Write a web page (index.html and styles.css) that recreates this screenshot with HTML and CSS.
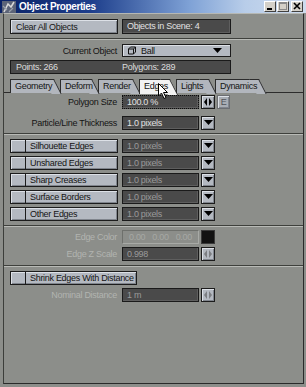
FILE: index.html
```html
<!DOCTYPE html>
<html lang="en">
<head>
    <meta charset="UTF-8">
    <title>Object Properties</title>
    <link rel="stylesheet" href="styles.css">
</head>
<body>
    <div class="window">
        <div class="titlebar">
            <svg class="app-icon" width="14" height="12" viewBox="0 0 14 12">
                <rect x="0" y="0" width="14" height="12" fill="#5c6478"/>
                <path d="M2 11 L6 3 L9 6 L12 1" stroke="#d8d8d8" stroke-width="1.6" fill="none"/>
                <path d="M1 5 L5 9 M7 11 L11 7" stroke="#9aa0aa" stroke-width="1.2" fill="none"/>
            </svg>
            <span class="title">Object Properties</span>
            <div class="title-btns">
                <span class="tbtn"><svg width="10" height="9" viewBox="0 0 10 9"><rect x="2" y="6" width="5" height="2" fill="#000"/></svg></span>
                <span class="tbtn"><svg width="10" height="9" viewBox="0 0 10 9"><rect x="1.5" y="0.5" width="7" height="7" fill="none" stroke="#8a8a8a"/><rect x="1.5" y="0.5" width="7" height="1.5" fill="#8a8a8a"/></svg></span>
                <span class="tbtn close"><svg width="10" height="9" viewBox="0 0 10 9"><path d="M2 1 L8 7 M8 1 L2 7" stroke="#000" stroke-width="1.6"/></svg></span>
            </div>
        </div>

        <div class="panel">
            <!-- scene -->
            <div class="row row-first">
                <button class="btn btn-clear">Clear All Objects</button>
                <div class="field field-long">Objects in Scene: 4</div>
            </div>
            <div class="sep"></div>

            <div class="row row-current">
                <span class="lbl">Current Object</span>
                <div class="select">
                    <svg class="cube" width="10" height="9" viewBox="0 0 10 9">
                        <path d="M1.5 3 L3.5 1 L8.5 1 L8.5 6 L6.5 8 L1.5 8 Z M1.5 3 L6.5 3 L6.5 8 M6.5 3 L8.5 1" fill="none" stroke="#111" stroke-width="1"/>
                    </svg>
                    <span class="select-text">Ball</span>
                    <svg class="down" width="9" height="5" viewBox="0 0 9 5"><path d="M0 0 L9 0 L4.5 5 Z" fill="#000"/></svg>
                </div>
            </div>

            <div class="row row-stats">
                <div class="stats">
                    <span class="stat-points">Points: 266</span>
                    <span>Polygons: 289</span>
                </div>
            </div>

            <!-- tabs -->
            <div class="tabs">
                <div class="tab tab-geo">Geometry</div>
                <div class="tab tab-def">Deform</div>
                <div class="tab tab-ren">Render</div>
                <div class="tab tab-edg active">Edges</div>
                <div class="tab tab-lig">Lights</div>
                <div class="tab tab-dyn">Dynamics</div>
                <svg class="cursor" width="11" height="17" viewBox="0 0 11 17">
                    <path d="M0.5 0.5 L0.5 13 L3.5 10 L6 15.5 L8 14.5 L5.5 9.5 L9.5 9.5 Z" fill="#fff" stroke="#000" stroke-width="1"/>
                </svg>
            </div>

            <div class="row row-poly">
                <span class="lbl">Polygon Size</span>
                <div class="field field-num focused">100.0 %</div>
                <span class="sbtn slider">
                    <svg width="10" height="8" viewBox="0 0 10 8"><path d="M4 0 L1 4 L4 8 Z M6 0 L9 4 L6 8 Z" fill="#000"/></svg>
                </span>
                <span class="sbtn ebtn">E</span>
            </div>
            <div class="row row-part">
                <span class="lbl">Particle/Line Thickness</span>
                <div class="field field-num">1.0 pixels</div>
                <span class="sbtn"><svg width="9" height="5" viewBox="0 0 9 5"><path d="M0 0 L9 0 L4.5 5 Z" fill="#000"/></svg></span>
            </div>
            <div class="sep sep-edges"></div>

            <!-- edge toggles -->
            <div class="edge-list">
                <div class="row">
                    <div class="toggle"><span class="check"></span><span class="toggle-text">Silhouette Edges</span></div>
                    <div class="field field-num dim">1.0 pixels</div>
                    <span class="sbtn"><svg width="9" height="5" viewBox="0 0 9 5"><path d="M0 0 L9 0 L4.5 5 Z" fill="#000"/></svg></span>
                </div>
                <div class="row">
                    <div class="toggle"><span class="check"></span><span class="toggle-text">Unshared Edges</span></div>
                    <div class="field field-num dim">1.0 pixels</div>
                    <span class="sbtn"><svg width="9" height="5" viewBox="0 0 9 5"><path d="M0 0 L9 0 L4.5 5 Z" fill="#000"/></svg></span>
                </div>
                <div class="row">
                    <div class="toggle"><span class="check"></span><span class="toggle-text">Sharp Creases</span></div>
                    <div class="field field-num dim">1.0 pixels</div>
                    <span class="sbtn"><svg width="9" height="5" viewBox="0 0 9 5"><path d="M0 0 L9 0 L4.5 5 Z" fill="#000"/></svg></span>
                </div>
                <div class="row">
                    <div class="toggle"><span class="check"></span><span class="toggle-text">Surface Borders</span></div>
                    <div class="field field-num dim">1.0 pixels</div>
                    <span class="sbtn"><svg width="9" height="5" viewBox="0 0 9 5"><path d="M0 0 L9 0 L4.5 5 Z" fill="#000"/></svg></span>
                </div>
                <div class="row">
                    <div class="toggle"><span class="check"></span><span class="toggle-text">Other Edges</span></div>
                    <div class="field field-num dim">1.0 pixels</div>
                    <span class="sbtn"><svg width="9" height="5" viewBox="0 0 9 5"><path d="M0 0 L9 0 L4.5 5 Z" fill="#000"/></svg></span>
                </div>
            </div>
            <div class="sep sep-color"></div>

            <!-- edge colour -->
            <div class="row row-color">
                <span class="lbl off">Edge Color</span>
                <div class="field field-num ghost">
                    <span>0.00</span><span>0.00</span><span>0.00</span>
                </div>
                <span class="swatch"></span>
            </div>
            <div class="row row-z">
                <span class="lbl off">Edge Z Scale</span>
                <div class="field field-num dim">0.998</div>
                <span class="sbtn slider">
                    <svg width="10" height="8" viewBox="0 0 10 8"><path d="M4 0 L1 4 L4 8 Z M6 0 L9 4 L6 8 Z" fill="#7c7e82"/></svg>
                </span>
            </div>
            <div class="sep sep-shrink"></div>

            <!-- shrink -->
            <div class="row row-shrink">
                <div class="toggle toggle-wide"><span class="check"></span><span class="toggle-text">Shrink Edges With Distance</span></div>
            </div>
            <div class="row row-nominal">
                <span class="lbl off">Nominal Distance</span>
                <div class="field field-num dim">1 m</div>
                <span class="sbtn slider">
                    <svg width="10" height="8" viewBox="0 0 10 8"><path d="M4 0 L1 4 L4 8 Z M6 0 L9 4 L6 8 Z" fill="#7c7e82"/></svg>
                </span>
            </div>
        </div>
    </div>
</body>
</html>
```

FILE: styles.css
```css
* {
    box-sizing: border-box;
}

body {
    margin: 0;
    background-color: #8c8e8a;
    font-family: "Liberation Sans", Arial, sans-serif;
    font-size: 9px;
    letter-spacing: -0.3px;
    color: #141414;
}

.window {
    width: 306px;
    height: 387px;
    display: flex;
    flex-direction: column;
    background-color: #8c8e8a;
}

/* title bar */
.titlebar {
    height: 13px;
    display: flex;
    align-items: center;
    background: linear-gradient(to right, #0a2266 0%, #1e3f8c 30%, #7fa2d6 62%, #b8cde9 80%, #cfdcee 100%);
}

.app-icon {
    margin-left: 2px;
    margin-right: 3px;
}

.title {
    color: #fff;
    font-weight: bold;
    font-size: 10px;
    letter-spacing: -0.4px;
}

.title-btns {
    margin-left: auto;
    margin-right: 3px;
    display: flex;
    gap: 1px;
}

.tbtn {
    width: 12px;
    height: 11px;
    display: flex;
    align-items: center;
    justify-content: center;
    background-color: #d4d0c8;
    border: 1px solid #404040;
    border-top-color: #fff;
    border-left-color: #fff;
}

.tbtn.close {
    margin-left: 1px;
}

/* main panel */
.panel {
    flex: 1;
    display: flex;
    flex-direction: column;
    margin: 0 2px 3px 3px;
    border-top: 1px solid #b6b8b4;
    border-left: 1px solid #3c3e3a;
    border-right: 1px solid #2a2a2a;
    border-bottom: 1px solid #2a2a2a;
}

.row {
    display: flex;
    align-items: center;
    gap: 4px;
    padding-left: 6px;
    height: 14px;
}

.row-first {
    margin-top: 5px;
    height: 15px;
}

.row-current {
    margin-top: 4px;
    height: 13px;
}

.row-stats {
    margin-top: 3px;
}

.row-poly {
    margin-top: 2px;
}

.row-part {
    margin-top: 7px;
}

.row-color {
    margin-top: 3px;
}

.row-z {
    margin-top: 3px;
}

.row-shrink {
    margin-top: 4px;
}

.row-nominal {
    margin-top: 3px;
}

.sep {
    height: 2px;
    margin-top: 4px;
    border-top: 1px solid #3e403c;
    border-bottom: 1px solid #b8bab6;
}

.sep-edges {
    margin-top: 3px;
}

.lbl {
    width: 108px;
    text-align: right;
    white-space: nowrap;
    padding-right: 1px;
}

.lbl.off {
    color: #b2b4b0;
}

.btn {
    width: 108px;
    height: 15px;
    padding: 0 5px;
    text-align: left;
    font: inherit;
    letter-spacing: inherit;
    color: #161616;
    background-color: #b4b9c1;
    border: 1px solid #1c1c1c;
    box-shadow: inset 1px 1px #dde1e7, inset -1px -1px #80858d;
}

.field {
    height: 14px;
    padding: 0 4px;
    line-height: 12px;
    color: #e2e2e2;
    background-color: #4a4a4a;
    border: 1px solid #1a1a1a;
    box-shadow: inset -1px -1px #5e5e5e;
    white-space: nowrap;
}

.row-first .field {
    height: 15px;
    line-height: 13px;
}

.field-long {
    width: 109px;
}

.field-num {
    width: 77px;
}

.field.focused {
    border: 1px dotted #0c0c0c;
}

.field.dim {
    color: #9a9a9a;
}

.field.ghost {
    display: flex;
    justify-content: space-between;
    color: #a6a8a4;
    background-color: #8c8e8a;
    border-color: #6e706c #a8aaa6 #a8aaa6 #6e706c;
    box-shadow: none;
    padding: 0 6px 0 6px;
}

.select {
    width: 109px;
    height: 13px;
    display: flex;
    align-items: center;
    padding: 0 8px 0 4px;
    background-color: #b4b9c1;
    border: 1px solid #1c1c1c;
    box-shadow: inset 1px 1px #dde1e7;
}

.select-text {
    margin-left: 4px;
}

.select .down {
    margin-left: auto;
}

.stats {
    width: 221px;
    height: 14px;
    display: flex;
    align-items: center;
    color: #dcdcdc;
    background-color: #4a4a4a;
    border: 1px solid #1a1a1a;
}

.stat-points {
    width: 111px;
    padding-left: 5px;
}

/* small square buttons */
.sbtn {
    width: 14px;
    height: 14px;
    margin-left: -2px;
    display: flex;
    align-items: flex-start;
    justify-content: center;
    padding-top: 3px;
    background-color: #b4b9c1;
    border: 1px solid #1c1c1c;
    box-shadow: inset 1px 1px #dde1e7, inset -1px -1px #80858d;
}

.sbtn.slider {
    align-items: center;
    padding-top: 0;
}

.ebtn {
    width: 13px;
    margin-left: -2px;
    padding-top: 0;
    align-items: center;
    color: #505258;
    background-color: #a9adb3;
    border-color: #6c6e72;
}

.swatch {
    width: 14px;
    height: 14px;
    margin-left: -2px;
    background-color: #121212;
    border: 1px solid #3a3a3a;
}

/* tabs */
.tabs {
    position: relative;
    display: flex;
    margin-top: 5px;
    padding-left: 6px;
    height: 14px;
    border-bottom: 1px solid #2c2c2c;
}

.tab {
    position: relative;
    z-index: 0;
    height: 14px;
    margin-right: 7px;
    padding-left: 4px;
    line-height: 13px;
    white-space: nowrap;
    background-color: #b2b6bd;
    border-top: 1px solid #2c2c2c;
    border-left: 1px solid #2c2c2c;
}

.tab::after {
    content: "";
    position: absolute;
    z-index: -1;
    top: -1px;
    right: -1px;
    width: 9px;
    height: 14px;
    background-color: inherit;
    border-top: 1px solid #2c2c2c;
    border-right: 1px solid #2c2c2c;
    transform: skewX(27deg);
    transform-origin: top left;
}

.tab.active {
    height: 15px;
    margin-bottom: -1px;
    background-color: #f2f2f2;
}

.tab.active::after {
    height: 15px;
}

.tab-geo { width: 43px; }
.tab-def { width: 31px; }
.tab-ren { width: 34px; }
.tab-edg { width: 30px; }
.tab-lig { width: 32px; }
.tab-dyn { width: 43px; }

.cursor {
    position: absolute;
    left: 154px;
    top: 4px;
    z-index: 5;
}

/* toggles */
.edge-list {
    display: flex;
    flex-direction: column;
    gap: 3px;
    margin-top: 4px;
}

.toggle {
    width: 108px;
    height: 14px;
    display: flex;
    align-items: center;
    background-color: #b4b9c1;
    border: 1px solid #1c1c1c;
    box-shadow: inset 1px 1px #dde1e7, inset -1px -1px #80858d;
}

.toggle-wide {
    width: 127px;
}

.check {
    width: 15px;
    height: 12px;
    border-right: 1px solid #1c1c1c;
}

.toggle-text {
    padding-left: 4px;
    white-space: nowrap;
}
```
